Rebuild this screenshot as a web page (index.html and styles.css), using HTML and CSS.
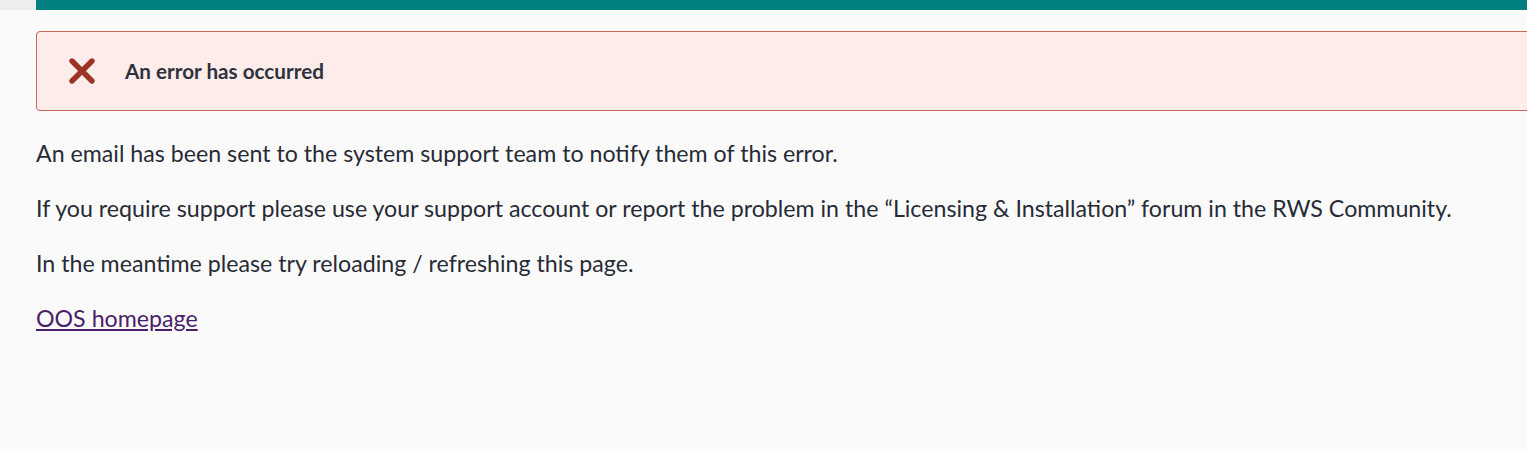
FILE: index.html
```html
<!DOCTYPE html>
<html lang="en">
<head>
<meta charset="utf-8">
<title>Error</title>
<link rel="stylesheet" href="styles.css">
</head>
<body>
<header class="topbar">
  <div class="topbar-gap"></div>
  <div class="topbar-brand"></div>
</header>
<main class="content">
  <div class="alert">
    <span class="alert-icon" aria-hidden="true">
      <svg width="28" height="28" viewBox="0 0 28 28">
        <path d="M4 4 L24 24 M24 4 L4 24" stroke="#9c3426" stroke-width="5.4" stroke-linecap="round" fill="none"/>
      </svg>
    </span>
    <span class="alert-title">An error has occurred</span>
  </div>
  <p class="msg">An email has been sent to the system support team to notify them of this error.</p>
  <p class="msg">If you require support please use your support account or report the problem in the “Licensing &amp; Installation” forum in the RWS Community.</p>
  <p class="msg">In the meantime please try reloading / refreshing this page.</p>
  <p class="msg"><a class="home-link" href="#">OOS homepage</a></p>
</main>
</body>
</html>
```

FILE: styles.css
```css
html, body {
  margin: 0;
  padding: 0;
}
body {
  background: #fafafa;
  font-family: "Lato", "Open Sans", sans-serif;
  color: #272b36;
  overflow-x: hidden;
}
.topbar {
  display: flex;
  height: 10px;
}
.topbar-gap {
  width: 36px;
  background: #ededed;
}
.topbar-brand {
  flex: 1;
  background: #008080;
}
.content {
  padding: 21px 0 0 36px;
}
.alert {
  display: flex;
  align-items: center;
  height: 78px;
  margin-right: -30px;
  background: #fdecea;
  border: 1px solid #c4685a;
  border-radius: 4px;
}
.alert-icon {
  display: flex;
  width: 28px;
  height: 28px;
  margin-left: 31px;
  margin-right: 29px;
}
.alert-title {
  font-weight: 700;
  font-size: 20.7px;
  color: #2e323d;
}
.msg {
  margin: 0;
  font-size: 23.2px;
  line-height: 55px;
}
.msg:first-of-type {
  margin-top: 15px;
}
.home-link {
  color: #4a1e6a;
}
```
